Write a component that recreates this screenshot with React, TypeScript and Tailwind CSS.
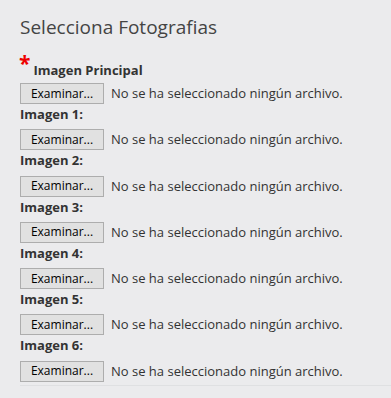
const slots = ['Imagen 1:', 'Imagen 2:', 'Imagen 3:', 'Imagen 4:', 'Imagen 5:', 'Imagen 6:'];

function FileField() {
  return (
    <div className="flex h-[21px] items-center">
      <button
        type="button"
        className="flex h-[21px] w-[84px] items-center justify-center border border-[#adadad] bg-[#e1e1e1] text-[12px] leading-none text-black"
      >
        Examinar...
      </button>
      <span className="ml-[7px] text-[13px] leading-none text-[#333]">
        No se ha seleccionado ningún archivo.
      </span>
    </div>
  );
}

export default function App() {
  return (
    <div
      className="h-[398px] w-[391px] bg-[#ebebed] pl-5 pt-[14px]"
      style={{ fontFamily: '"Open Sans", "Liberation Sans", sans-serif' }}
    >
      {/* Title */}
      <h2 className="text-[19px] leading-[26px] text-[#444]">Selecciona Fotografias</h2>

      {/* Principal */}
      <div className="mt-[21px] flex items-end leading-none">
        <span className="relative -top-[7px] -ml-px text-[21px] font-bold leading-[18px] text-[#e00]">*</span>
        <span className="ml-[3px] text-[13px] font-bold leading-[18px] text-[#333]">Imagen Principal</span>
      </div>
      <div className="mt-[4px]">
        <FileField />
      </div>

      {/* Additional slots */}
      {slots.map((s) => (
        <div key={s}>
          <div className="mb-[6.3px] mt-[1px] text-[13px] font-bold leading-[18px] text-[#333]">{s}</div>
          <FileField />
        </div>
      ))}

      <div className="mt-[3px] border-b border-[#dfe0e2]" />
    </div>
  );
}
